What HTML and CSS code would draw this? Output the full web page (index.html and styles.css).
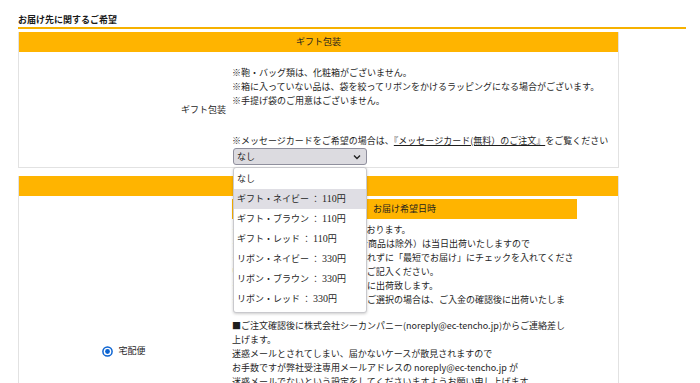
FILE: index.html
```html
<!DOCTYPE html>
<html lang="ja">
  <head>
    <meta charset="UTF-8" />
    <meta name="viewport" content="width=device-width, initial-scale=1.0" />
    <link rel="stylesheet" href="styles.css">
    <title>お届け先に関するご希望</title>
  </head>
  <body>
    <div class="page">
      <h3 class="sec-title">お届け先に関するご希望</h3>

      <table class="form-table">
        <colgroup>
          <col class="col-label" />
          <col />
        </colgroup>
        <tr>
          <th colspan="2" class="head">ギフト包装</th>
        </tr>
        <tr>
          <th class="label">ギフト包装</th>
          <td class="field gift">
            <p>
              ※鞄・バッグ類は、化粧箱がございません。<br />
              ※箱に入っていない品は、袋を絞ってリボンをかけるラッピングになる場合がございます。<br />
              ※手提げ袋のご用意はございません。
            </p>
            <p class="card-note">
              ※メッセージカードをご希望の場合は、<a href="#">『メッセージカード(無料）のご注文』</a>をご覧ください
            </p>
            <div class="select-wrap">
              <div class="select">
                <span>なし</span>
                <svg width="8" height="6" viewBox="0 0 8 6"><polyline points="1,1.5 4,4.5 7,1.5" fill="none" stroke="#222" stroke-width="1.4" /></svg>
              </div>
              <ul class="options">
                <li>なし</li>
                <li class="active">ギフト・ネイビー ： <span class="num">110</span>円</li>
                <li>ギフト・ブラウン ： <span class="num">110</span>円</li>
                <li>ギフト・レッド ： <span class="num">110</span>円</li>
                <li>リボン・ネイビー ： <span class="num">330</span>円</li>
                <li>リボン・ブラウン ： <span class="num">330</span>円</li>
                <li>リボン・レッド ： <span class="num">330</span>円</li>
              </ul>
            </div>
          </td>
        </tr>
      </table>

      <table class="form-table second">
        <colgroup>
          <col class="col-label" />
          <col />
        </colgroup>
        <tr>
          <th colspan="2" class="head">お届け方法</th>
        </tr>
        <tr>
          <th class="label center">
            <span class="radio-line">
              <svg width="11" height="11" viewBox="0 0 11 11"><circle cx="5.5" cy="5.5" r="4.6" fill="#fff" stroke="#0b63d1" stroke-width="1.5" /><circle cx="5.5" cy="5.5" r="2.4" fill="#0b63d1" /></svg>
              宅配便
            </span>
          </th>
          <td class="field delivery">
            <div class="subhead">お届け希望日時</div>
            <p>
              ※ご注文順に順次発送手配をしております。<br />
              ※平日12時までのご注文（取寄せ商品は除外）は当日出荷いたしますので<br />
              ※お急ぎの場合は、希望日時を入れずに「最短でお届け」にチェックを入れてくださ<br />
              い。お日にちのご指定は備考欄にご記入ください。<br />
              ※土日祝日のご注文は、翌営業日に出荷致します。<br />
              ※お支払い方法で「銀行振込」をご選択の場合は、ご入金の確認後に出荷いたしま
            </p>
            <p class="mail-note">
              ■ご注文確認後に株式会社シーカンパニー(noreply@ec-tencho.jp)からご連絡差し<br />
              上げます。<br />
              迷惑メールとされてしまい、届かないケースが散見されますので<br />
              お手数ですが弊社受注専用メールアドレスの noreply@ec-tencho.jp が<br />
              迷惑メールでないという設定をしてくださいますようお願い申し上げます。
            </p>
            <p class="more">
              お届け希望日：指定なし<br />
              お届け時間帯：指定なし<br />
              ※離島・一部地域はご希望に添えない場合がございます。<br />
              ※天候や交通事情によりお届けが遅れる場合がございます。<br />
              ※年末年始・大型連休中はお届け日のご指定を承れない場合がございます。<br />
              ※ご不在の場合は不在票をご確認ください。
            </p>
          </td>
        </tr>
      </table>
    </div>
  </body>
</html>
```

FILE: styles.css
```css
* {
  margin: 0;
  padding: 0;
  box-sizing: border-box;
}

body {
  font-family: "Noto Sans CJK JP", sans-serif;
  font-size: 9px;
  line-height: 14px;
  color: #1e1e1e;
  background-color: #fff;
}

.page {
  padding: 13px 14px 0 18px;
}

.sec-title {
  font-size: 9px;
  line-height: 14px;
  font-weight: bold;
  color: #1a1a1a;
  border-bottom: 2px solid #f6b100;
}

.form-table {
  width: 601px;
  margin-top: 3px;
  border-collapse: separate;
  border-spacing: 0;
  table-layout: fixed;
  border: 1px solid #e2e2e2;
  border-top: none;
}
.form-table.second {
  margin-top: 8px;
}
.col-label {
  width: 210px;
}

.head {
  height: 20px;
  background-color: #ffb400;
  font-weight: normal;
  text-align: center;
}

.label {
  padding-right: 3px;
  font-weight: normal;
  text-align: right;
  vertical-align: middle;
}
.label.center {
  padding-right: 0;
  text-align: center;
}

.radio-line {
  display: inline-flex;
  align-items: center;
  gap: 5px;
}

.field {
  padding-left: 3px;
  vertical-align: top;
  text-align: left;
  white-space: nowrap;
}
.field.gift {
  padding-top: 14px;
  padding-bottom: 2px;
}
.field.delivery {
  padding-top: 3px;
  padding-bottom: 22px;
}

.field a {
  color: #1e1e1e;
  text-decoration: underline;
}

.card-note {
  margin-top: 26px;
}

.select-wrap {
  position: relative;
  width: 134px;
  margin-left: 1px;
}

.select {
  display: flex;
  justify-content: space-between;
  align-items: center;
  height: 17px;
  padding: 0 5px 0 3px;
  border: 1px solid #8f8f9d;
  border-radius: 3px;
  background-color: #dcdbe0;
}

.options {
  position: absolute;
  top: 19px;
  left: 0;
  width: 134px;
  padding: 1px 0 3px;
  list-style: none;
  background-color: #fff;
  border: 1px solid #c9c9cd;
  border-radius: 3px;
  box-shadow: 0 1px 3px rgba(0, 0, 0, 0.2);
  z-index: 10;
}
.options li {
  height: 20px;
  line-height: 20px;
  padding-left: 3px;
  white-space: nowrap;
}
.options li.active {
  background-color: #dfdee4;
}
.num {
  font-family: "Liberation Serif", serif;
  font-size: 10px;
}

.subhead {
  width: 345px;
  height: 20px;
  line-height: 20px;
  margin-bottom: 4px;
  background-color: #ffb400;
  text-align: center;
}

.mail-note {
  margin-top: 12px;
}

.more {
  margin-top: 14px;
}
```
